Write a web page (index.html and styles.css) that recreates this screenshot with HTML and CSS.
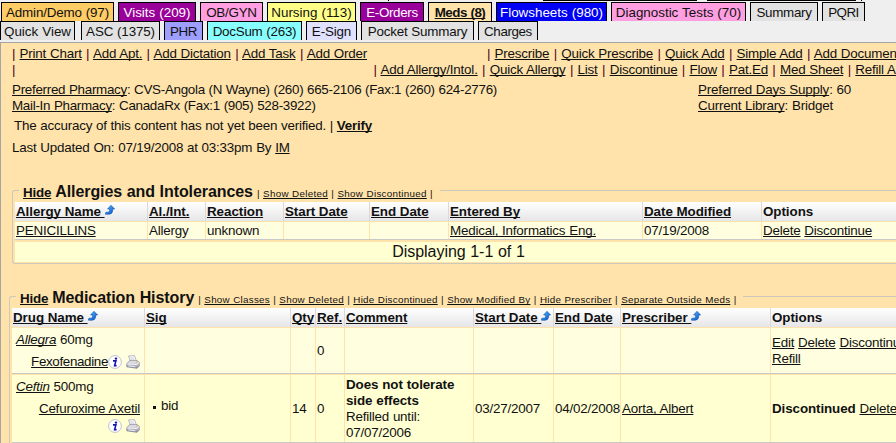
FILE: index.html
```html
<!DOCTYPE html>
<html lang="en">
<head>
<meta charset="utf-8">
<title>Chart - Meds</title>
<link rel="stylesheet" href="styles.css">
</head>
<body>
<svg width="0" height="0" class="defs">
  <defs>
    <linearGradient id="blue" x1="0" y1="0" x2="1" y2="1"><stop offset="0" stop-color="#5cc0ff"/><stop offset="1" stop-color="#004fc8"/></linearGradient>
    <linearGradient id="metal" x1="0" y1="0" x2="0" y2="1"><stop offset="0" stop-color="#f4f4fa"/><stop offset="1" stop-color="#8c8ca0"/></linearGradient>
    <symbol id="sort" viewBox="0 0 10 10"><path d="M6 0.3 L9.6 4 H7.6 V6 Q7.3 9 4.2 9.2 H0.5 Q0.3 7.8 1 7.2 H3.2 Q4.6 7 4.6 5.6 V4 H2.6 Z" fill="url(#blue)" stroke="#0a4cae" stroke-width=".6"/></symbol>
    <symbol id="info" viewBox="0 0 14 14"><circle cx="7" cy="7" r="6.4" fill="#fff" stroke="#b9b9cc" stroke-width=".9"/><circle cx="8" cy="3.6" r="1.2" fill="#1414b4"/><path d="M5 5.9H7.9L6.6 10.6H8.6" fill="none" stroke="#1414b4" stroke-width="1.6"/></symbol>
    <symbol id="print" viewBox="0 0 14 14"><path d="M2.5 1 L8.5 .6 L10.5 6.5 H4.5 Z" fill="#fff" stroke="#a4a4b8" stroke-width=".8"/><path d="M4 3h4M4.6 4.8h4" stroke="#b6b6ca" stroke-width=".7"/><path d="M.8 8.6 L3.8 5.7 H11 L13.2 7.3 V11 L11 13.3 L.8 11.8 Z" fill="url(#metal)" stroke="#77778c" stroke-width=".7"/><path d="M1.3 8.8 L10.6 9.6 L13 7.5M2.4 10.8l7 1" fill="none" stroke="#fff" stroke-width=".8"/><path d="M10.2 6.6h1.3v1h-1.3z" fill="#f0a030"/></symbol>
  </defs>
</svg>

<div class="sliver"><i class="s1"></i><i class="s2"></i><i class="s3"></i><i class="s4"></i></div>
<nav class="tabs">
  <a class="tab orange w-admin">Admin/Demo (97)</a><a class="tab purple w-visits">Visits (209)</a><a class="tab pink w-ob">OB/GYN</a><a class="tab yellow w-nursing">Nursing (113)</a><a class="tab purple w-eorders">E-Orders</a><a class="tab active w-meds"><u>Meds (8)</u></a><a class="tab blue w-flow">Flowsheets (980)</a><a class="tab pink w-diag">Diagnostic Tests (70)</a><a class="tab gray w-summary">Summary</a><a class="tab gray w-pqri">PQRI</a>
</nav>
<nav class="tabs second">
  <a class="tab gray w-quick">Quick View</a><a class="tab gray w-asc">ASC (1375)</a><a class="tab violet w-phr">PHR</a><a class="tab cyan w-doc">DocSum (263)</a><a class="tab lavender w-esign">E-Sign</a><a class="tab gray w-pocket">Pocket Summary</a><a class="tab gray w-charges">Charges</a>
</nav>

<main>
  <div class="links">
    <div class="left"><b>|</b> <u>Print Chart</u> <b>|</b> <u>Add Apt.</u> <b>|</b> <u>Add Dictation</u> <b>|</b> <u>Add Task</u> <b>|</b> <u>Add Order</u></div>
    <div class="right"><b>|</b> <u>Prescribe</u> <b>|</b> <u>Quick Prescribe</u> <b>|</b> <u>Quick Add</u> <b>|</b> <u>Simple Add</u> <b>|</b> <u>Add Document</u></div>
  </div>
  <div class="links lower">
    <div class="left"><b>|</b></div>
    <div class="right"><b>|</b> <u>Add Allergy/Intol.</u> <b>|</b> <u>Quick Allergy</u> <b>|</b> <u>List</u> <b>|</b> <u>Discontinue</u> <b>|</b> <u>Flow</u> <b>|</b> <u>Pat.Ed</u> <b>|</b> <u>Med Sheet</u> <b>|</b> <u>Refill All</u></div>
  </div>
  <div class="info">
    <div class="pharmacy"><u>Preferred Pharmacy</u>: CVS-Angola (N Wayne) (260) 665-2106 (Fax:1 (260) 624-2776)<br><u>Mail-In Pharmacy</u>: CanadaRx (Fax:1 (905) 528-3922)</div>
    <div class="supply"><u>Preferred Days Supply</u>: 60<br><u>Current Library</u>: Bridget</div>
  </div>
  <p class="verify">The accuracy of this content has not yet been verified. | <u class="bold">Verify</u></p>
  <p class="updated">Last Updated On: 07/19/2008 at 03:33pm By <u>IM</u></p>

  <section class="panel allergies">
    <header><u class="hide">Hide</u><h2>Allergies and Intolerances</h2><small>| <u>Show Deleted</u> | <u>Show Discontinued</u> |</small></header>
    <div class="row head"><div><u>Allergy Name </u><svg class="sort"><use href="#sort"/></svg></div><div><u>Al./Int.</u></div><div><u>Reaction</u></div><div><u>Start Date</u></div><div><u>End Date</u></div><div><u>Entered By</u></div><div><u>Date Modified</u></div><div>Options</div></div>
    <div class="row data"><div><u>PENICILLINS</u></div><div>Allergy</div><div>unknown</div><div></div><div></div><div><u>Medical, Informatics Eng.</u></div><div>07/19/2008</div><div><u>Delete</u>&nbsp;<u>Discontinue</u></div></div>
    <div class="count">Displaying 1-1 of 1</div>
  </section>

  <section class="panel meds">
    <header><u class="hide">Hide</u><h2>Medication History</h2><small>| <u>Show Classes</u> | <u>Show Deleted</u> | <u>Hide Discontinued</u> | <u>Show Modified By</u> | <u>Hide Prescriber</u> | <u>Separate Outside Meds</u> |</small></header>
    <div class="row head"><div><u>Drug Name </u><svg class="sort"><use href="#sort"/></svg></div><div><u>Sig</u></div><div><u>Qty</u></div><div><u>Ref.</u></div><div><u>Comment</u></div><div><u>Start Date </u><svg class="sort"><use href="#sort"/></svg></div><div><u>End Date</u></div><div><u>Prescriber </u><svg class="sort"><use href="#sort"/></svg></div><div>Options</div></div>
    <div class="row data first">
      <div class="drug"><span><u class="it">Allegra</u> 60mg</span><span class="generic"><u>Fexofenadine</u><svg class="ic"><use href="#info"/></svg><svg class="ic pr"><use href="#print"/></svg></span></div>
      <div></div><div></div><div>0</div><div></div><div></div><div></div><div></div><div><span><u>Edit</u> <u>Delete</u> <u>Discontinue</u><br><u>Refill</u></span></div>
    </div>
    <div class="row data last">
      <div class="drug"><span><u class="it">Ceftin</u> 500mg</span><span class="generic"><u>Cefuroxime Axetil</u></span><span class="icons"><svg class="ic"><use href="#info"/></svg><svg class="ic pr"><use href="#print"/></svg></span></div>
      <div class="sig"><i class="dot"></i>bid</div><div>14</div><div>0</div><div><span><strong>Does not tolerate<br>side effects</strong><br>Refilled until:<br>07/07/2006</span></div><div>03/27/2007</div><div>04/02/2008</div><div><u>Aorta, Albert</u></div><div><strong>Discontinued</strong>&nbsp;<u>Delete</u></div>
    </div>
  </section>
</main>
</body>
</html>
```
FILE: styles.css
```css
* { box-sizing: border-box; }
html { overflow: hidden; }
body { margin: 0; width: 896px; height: 443px; overflow: hidden; background: #efefef; color: #111; font: 13.4px/16px "Liberation Sans", Arial, sans-serif; letter-spacing: -.2px; word-spacing: .3px; white-space: nowrap; }
.defs { position: absolute; }
u { text-decoration-thickness: 1px; text-underline-offset: 1px; text-decoration-skip-ink: none; }
p { margin: 0; }

.sliver { display: flex; height: 2px; }
.sliver i { height: 1px; background: #000; }
.sliver .s1 { width: 1px; margin-left: 388px; }
.sliver .s2 { width: 154px; margin-left: 154px; }
.sliver .s3 { width: 149px; margin-left: 10px; }
.sliver .s4 { width: 1px; margin-left: 5px; }

.tabs { display: flex; gap: 4px; height: 19px; padding-left: 1px; }
.tabs.second { height: 19px; padding-left: 0; }
.tab { height: 19px; border: 1px solid #000; border-bottom: 0; line-height: 20px; text-align: center; letter-spacing: 0; }
.orange { background: #ffcc66; }
.purple { background: #990099; color: #fff; }
.pink { background: #ff9ee0; }
.yellow { background: #ffff88; }
.active { background: #ffe3ab; font-weight: bold; letter-spacing: -.5px; }
.blue { background: #0000f4; color: #fff; }
.gray { background: #e2e2e2; }
.violet { background: #9e9eff; }
.cyan { background: #88ffff; }
.lavender { background: #dfe1ff; }
.w-admin { width: 113px; letter-spacing: -.15px; }
.w-visits { width: 78px; }
.w-ob { width: 63px; letter-spacing: -.25px; }
.w-nursing { width: 89px; }
.w-eorders { width: 64px; letter-spacing: -.35px; }
.w-meds { width: 64px; }
.w-flow { width: 111px; }
.w-diag { width: 135px; }
.w-summary { width: 68px; letter-spacing: -.3px; }
.w-pqri { width: 43px; letter-spacing: -.55px; }
.w-quick { width: 75px; margin-right: 2px; }
.w-asc { width: 79px; letter-spacing: -.15px; }
.w-phr { width: 39px; letter-spacing: -.35px; }
.w-doc { width: 95px; letter-spacing: -.25px; }
.w-esign { width: 51px; letter-spacing: -.15px; }
.w-pocket { width: 113px; letter-spacing: -.2px; }
.w-charges { width: 60px; letter-spacing: -.4px; }

main { margin-top: 2px; height: 401px; border-top: 1px solid #a5a5a5; border-left: 1px solid #a5a5a5; background: #ffe3ab; padding-top: 3px; }
.links { display: flex; height: 16px; padding-left: 11px; }
.links b { margin: 0 .5px; font-weight: normal; color: #502; }
.links b:first-child { margin-left: 0; }
.links .left { width: 475px; flex: none; }
.links.lower .left { width: 361px; }
.lower .right b { margin: 0 .55px; }
.info { display: flex; padding: 4px 0 0 11px; }
.pharmacy { width: 686px; letter-spacing: -.29px; }
.verify { padding: 4px 0 0 13px; letter-spacing: -.21px; }
.bold { font-weight: bold; }
.updated { padding: 6px 0 0 11px; }

.panel { border: 1px solid #ccc9bb; border-right: 0; border-radius: 3px 0 0 3px; width: 900px; }
.allergies { margin: 34px 0 0 11px; height: 74px; padding-left: 2px; }
.meds { margin: 32px 0 0 8px; height: 160px; padding-left: 2px; }
.panel header { display: flex; width: max-content; height: 20px; margin: -9px 0 0 4px; padding: 0 7px 0 4px; align-items: baseline; background: #ffe3ab; line-height: 20px; }
.hide { font-weight: bold; }
h2 { margin: 0 4px; font-size: 16px; line-height: 20px; letter-spacing: -.08px; }
small { font-size: 9.8px; letter-spacing: .3px; }
.meds small { letter-spacing: .27px; }
.row { display: grid; }
.allergies .row { grid-template-columns: 133px 58px 78px 86px 79px 194px 119px 160px; }
.meds .row { grid-template-columns: 133px 146px 25px 29px 129px 80px 67px 150px 160px; }
.row > div { display: flex; align-items: center; border-right: 1px solid #ffe3ab; padding-left: 1px; overflow: hidden; white-space: pre; }
.row.head { height: 19px; margin-bottom: 1px; font-weight: bold; letter-spacing: -.06px; word-spacing: 0; }
.row.head > div { background: linear-gradient(#fff, #e6e6e8); border-right: 1px solid #d9d9dd; }
.row.data { height: 18px; background: #ffffe0; border-bottom: 1px solid #c8c8c8; }
.count { height: 20px; margin-top: 2px; padding-right: 10px; background: #ffffd2; font-size: 16px; line-height: 20px; text-align: center; letter-spacing: -.05px; }
.sort { width: 10px; height: 10px; margin-top: -4px; }
.row.first { height: 46px; }
.row.last { height: 68px; margin-top: 1px; background: #ffffd2; }
.row > .drug { flex-direction: column; align-items: stretch; justify-content: flex-start; padding: 4px 4px 0; }
.it { font-style: italic; }
.generic { display: flex; justify-content: flex-end; align-items: center; height: 16px; margin-top: 6px; }
.icons { display: flex; justify-content: flex-end; height: 14px; margin-top: 2px; }
.ic { width: 14px; height: 14px; }
.pr { margin-left: 4px; }
.first .generic u { letter-spacing: -.35px; }
.row > .sig { padding: 0 0 6px 8px; }
.dot { width: 3px; height: 3px; margin: 4px 5px 0 0; background: #111; }
strong { letter-spacing: -.1px; }
```
